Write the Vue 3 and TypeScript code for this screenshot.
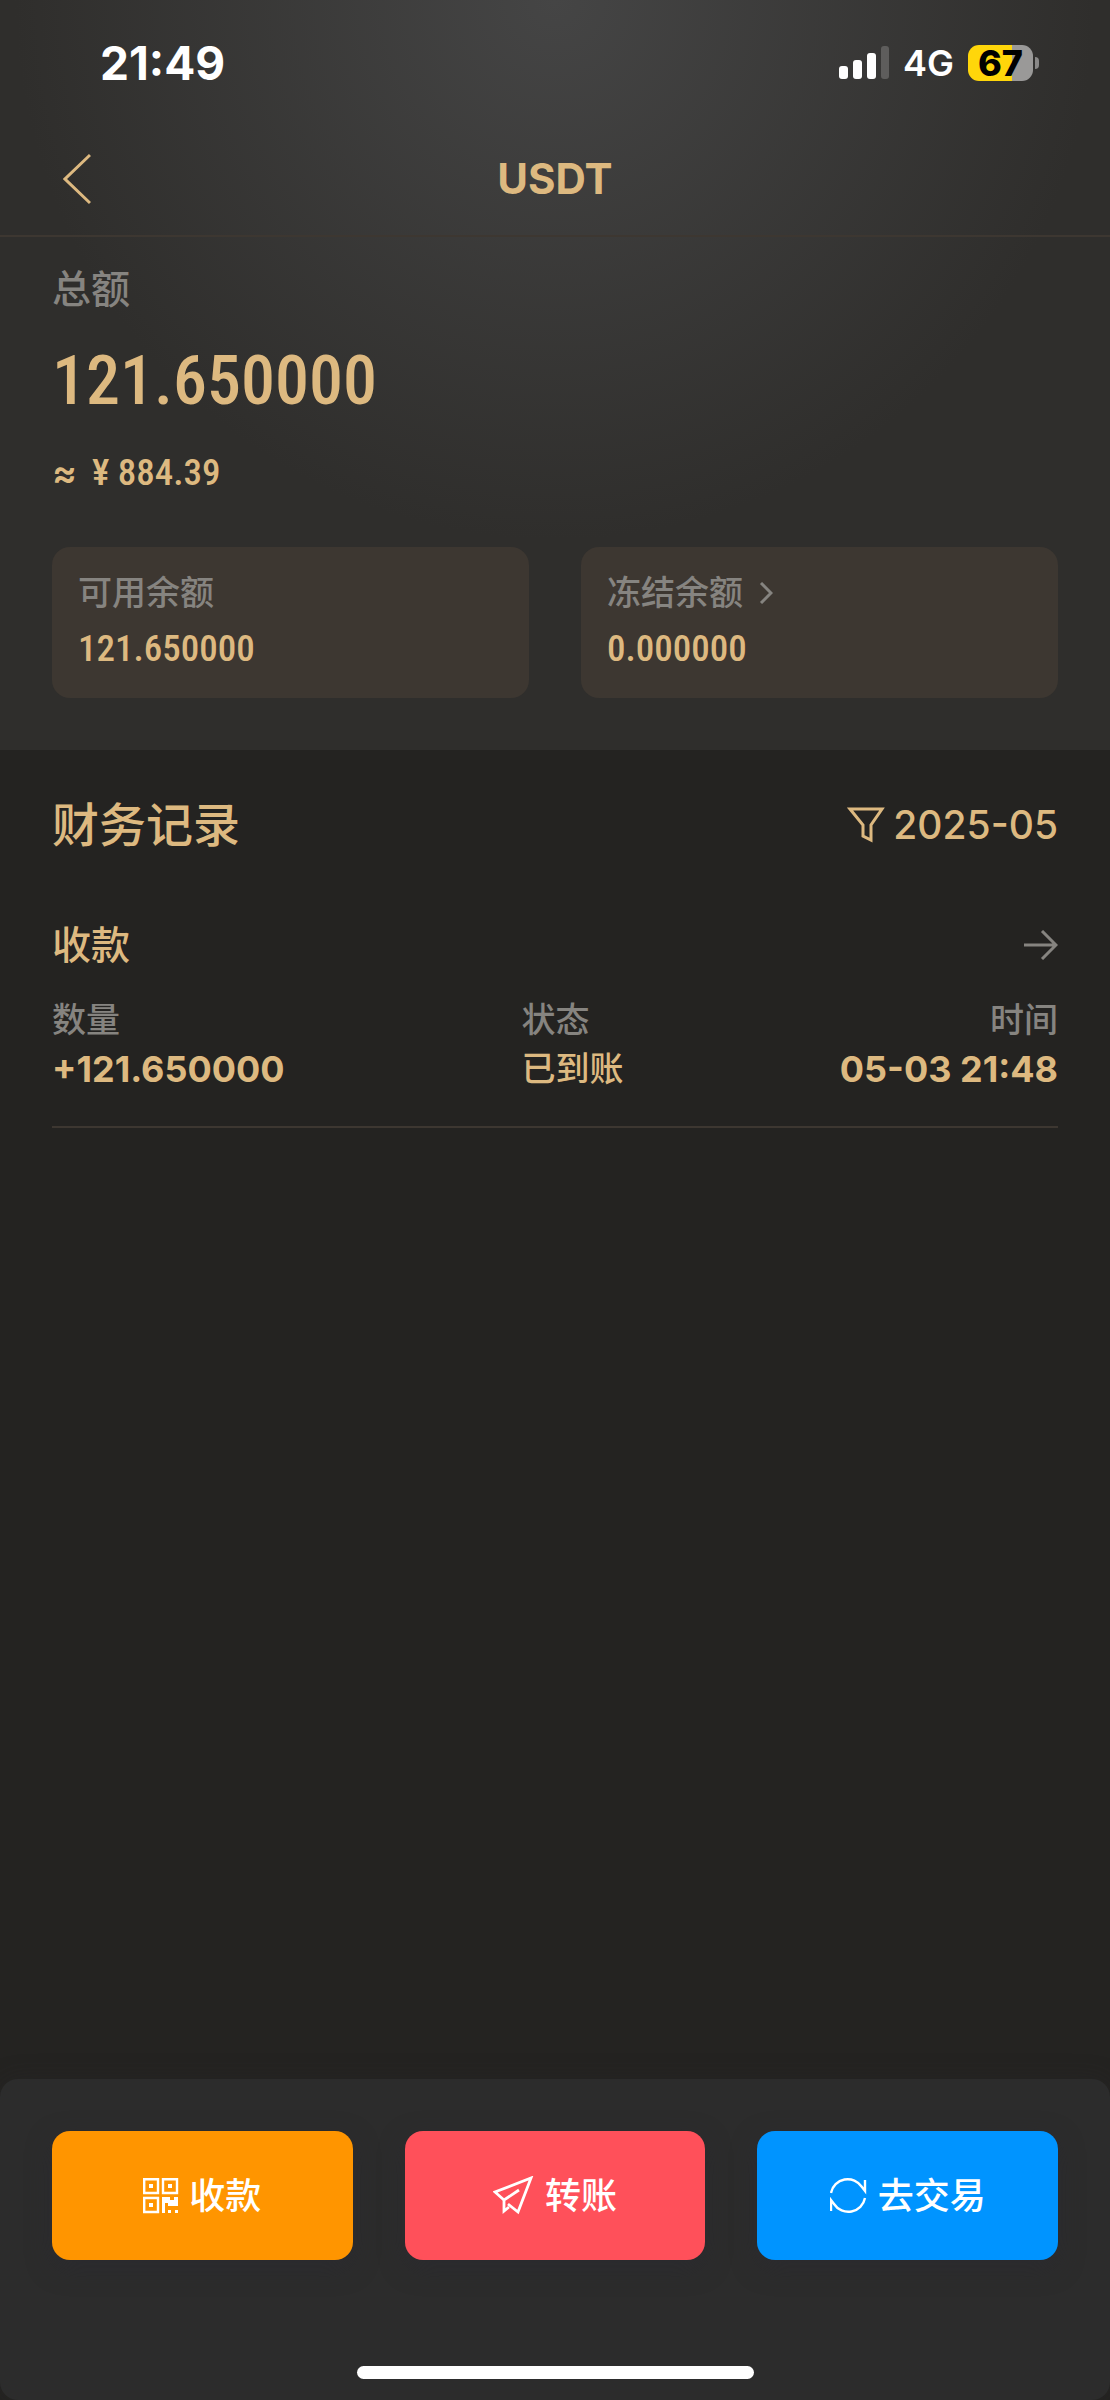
<script setup lang="ts">
interface Balance {
  label: string
  value: string
  link?: string
}

interface Field {
  label: string
  value: string
}

interface RecordItem {
  title: string
  fields: Field[]
}

interface Action {
  id: 'receive' | 'transfer' | 'trade'
  label: string
}

const balances: Balance[] = [
  { label: '可用余额', value: '121.650000' },
  { label: '冻结余额', value: '0.000000', link: '#frozen' },
]

const records: RecordItem[] = [
  {
    title: '收款',
    fields: [
      { label: '数量', value: '+121.650000' },
      { label: '状态', value: '已到账' },
      { label: '时间', value: '05-03 21:48' },
    ],
  },
]

const actions: Action[] = [
  { id: 'receive', label: '收款' },
  { id: 'transfer', label: '转账' },
  { id: 'trade', label: '去交易' },
]
</script>

<template>
  <div class="page">
    <div class="top">
      <div class="status">
        <span class="clock">21:49</span>
        <div class="status-right">
          <svg class="signal" width="50" height="34" viewBox="0 0 50 34" fill="#fff" aria-hidden="true">
            <rect x="0" y="20" width="9" height="13" rx="3" />
            <rect x="14" y="14" width="9" height="19" rx="3" />
            <rect x="28" y="7" width="9" height="26" rx="3" />
            <rect x="42" y="0" width="8" height="33" rx="3" fill="#5e5d5c" />
          </svg>
          <span class="network">4G</span>
          <div class="battery"><span class="level">67</span><i class="nub"></i></div>
        </div>
      </div>

      <header class="nav">
        <button class="back" type="button" aria-label="返回">
          <svg width="28" height="52" viewBox="0 0 28 52" fill="none" stroke="currentColor" stroke-width="3" aria-hidden="true">
            <path d="M27 2 2 26 27 50" />
          </svg>
        </button>
        <h1>USDT</h1>
      </header>

      <section class="summary">
        <p class="total-label">总额</p>
        <p class="total">121.650000</p>
        <p class="fiat"><span class="approx">≈</span><span>¥ 884.39</span></p>
        <div class="cards">
          <component :is="b.link ? 'a' : 'div'" v-for="b in balances" :key="b.label" class="card" :href="b.link">
            <span class="card-label">
              {{ b.label }}
              <svg v-if="b.link" width="14" height="22" viewBox="0 0 14 22" fill="none" stroke="currentColor" stroke-width="3" aria-hidden="true">
                <path d="M2 1 12 11 2 21" />
              </svg>
            </span>
            <span class="card-value">{{ b.value }}</span>
          </component>
        </div>
      </section>
    </div>

    <main class="records">
      <div class="records-head">
        <h2>财务记录</h2>
        <button class="filter" type="button">
          <svg width="38" height="36" viewBox="0 0 38 36" fill="none" stroke="currentColor" stroke-width="3" aria-hidden="true">
            <path d="M3 2H35L24 18V33L16 29V18Z" />
          </svg>
          2025-05
        </button>
      </div>

      <article v-for="r in records" :key="r.title" class="record">
        <a class="record-title" href="#detail">
          {{ r.title }}
          <svg width="34" height="30" viewBox="0 0 34 30" fill="none" stroke="currentColor" stroke-width="3" aria-hidden="true">
            <path d="M0 15H32M18 1 32 15 18 29" />
          </svg>
        </a>
        <dl class="fields">
          <div v-for="f in r.fields" :key="f.label" class="field">
            <dt>{{ f.label }}</dt>
            <dd>{{ f.value }}</dd>
          </div>
        </dl>
      </article>
    </main>

    <footer class="bottom">
      <div class="actions">
        <button v-for="a in actions" :key="a.id" type="button" class="action" :class="a.id">
          <svg v-if="a.id === 'receive'" width="36" height="36" viewBox="0 0 36 36" aria-hidden="true">
            <path fill="none" stroke="#fff" stroke-width="2.4" d="M1.2 1.2H15V15H1.2ZM20 1.2H34V15H20ZM1.2 20H15V34H1.2Z" />
            <path fill="#fff" d="M6 6h4v4H6zM25 6h4v4h-4zM6 25h4v4H6zM19 19h8v3h4v-3h4v9H25v-3h-3v10h-3zM25 32h3v3h-3zM32 32h3v3h-3z" />
          </svg>
          <svg v-else-if="a.id === 'transfer'" width="42" height="40" viewBox="0 0 42 40" fill="none" stroke="#fff" stroke-width="2.8" aria-hidden="true">
            <path d="M11 24 2 16 38 2 25 36 15 28" />
            <path d="M26 14 11 24V35L16 31" />
          </svg>
          <svg v-else width="38" height="38" viewBox="0 0 38 38" fill="none" stroke="#fff" stroke-width="2.4" aria-hidden="true">
            <path d="M1 16A17 17 0 0 1 32 10L35 14V3M35 21A17 17 0 0 1 4 27L1 23V34" />
          </svg>
          <span>{{ a.label }}</span>
        </button>
      </div>
      <div class="home-bar"></div>
    </footer>
  </div>
</template>

<style>
body {
  margin: 0;
  background: #242321;
}
</style>

<style scoped>
.page {
  --gold: #ddb980;
  --muted: #868480;
  --card: #3d3731;
  --din: 'Roboto Condensed', 'Liberation Sans Narrow', 'Roboto', sans-serif;
  display: flex;
  flex-direction: column;
  min-height: 100vh;
  color: var(--gold);
  background: #242321;
  font-family: 'Inter', 'Noto Sans CJK SC', sans-serif;
  font-weight: 500;
}

h1,
h2,
p,
dl,
dd {
  margin: 0;
}

button {
  border: 0;
  padding: 0;
  background: none;
  color: inherit;
  font: inherit;
}

a {
  color: inherit;
  text-decoration: none;
}

svg {
  display: block;
  flex: none;
}

.top {
  background: radial-gradient(circle 540px at 50% 0, #454545, #2f2e2c) #2f2e2c;
}

.status {
  display: flex;
  align-items: center;
  justify-content: space-between;
  height: 126px;
  padding: 0 77px 0 100px;
  color: #fff;
}

.clock {
  font-size: 46px;
  font-weight: 700;
}

.status-right {
  display: flex;
  align-items: center;
}

.network {
  margin: 0 14px;
  font-size: 36px;
  font-weight: 600;
}

.battery {
  position: relative;
  width: 65px;
  height: 36px;
  border-radius: 11px;
  background: linear-gradient(90deg, #ffd60a 67%, #9a9998 67%);
}

.level {
  display: block;
  color: #000;
  font-size: 36px;
  font-weight: 800;
  line-height: 36px;
  text-align: center;
}

.nub {
  position: absolute;
  top: 12px;
  right: -6px;
  width: 4px;
  height: 12px;
  border-radius: 0 4px 4px 0;
  background: #8a8988;
}

.nav {
  display: grid;
  grid-template-columns: 1fr auto 1fr;
  align-items: center;
  height: 106px;
  padding: 0 63px 3px;
  border-bottom: 2px solid var(--card);
}

.back {
  justify-self: start;
}

h1 {
  font-size: 42px;
  font-weight: 700;
  line-height: 56px;
}

.summary {
  padding: 24px 52px 52px;
}

.total-label {
  color: var(--muted);
  font-size: 39px;
  line-height: 56px;
}

.total {
  margin-top: 26px;
  font-family: var(--din);
  font-size: 68px;
  line-height: 76px;
}

.fiat {
  display: flex;
  gap: 15px;
  margin-top: 26px;
  font-family: var(--din);
  font-size: 37px;
  line-height: 56px;
}

.approx {
  font-family: 'Inter', sans-serif;
  font-weight: 600;
}

.cards {
  display: grid;
  grid-template-columns: 1fr 1fr;
  gap: 52px;
  margin-top: 46px;
}

.card {
  display: flex;
  flex-direction: column;
  gap: 8px;
  padding: 22px 26px 25px;
  border-radius: 18px;
  background: var(--card);
}

.card-label {
  display: flex;
  align-items: center;
  gap: 16px;
  color: var(--muted);
  font-size: 34px;
  line-height: 48px;
}

.card-value {
  font-family: var(--din);
  font-size: 37px;
  line-height: 48px;
}

.records {
  flex: 1;
  padding: 47px 52px;
}

.records-head {
  display: flex;
  align-items: center;
  justify-content: space-between;
}

h2 {
  font-size: 47px;
  font-weight: 500;
  line-height: 56px;
}

.filter {
  display: flex;
  align-items: center;
  gap: 8px;
  font-size: 39px;
  line-height: 56px;
}

.record {
  margin-top: 64px;
  padding-bottom: 32px;
  border-bottom: 2px solid var(--card);
}

.record-title {
  display: flex;
  align-items: center;
  justify-content: space-between;
  font-size: 39px;
  line-height: 56px;
}

.record-title svg {
  color: var(--muted);
}

.fields {
  display: grid;
  grid-template-columns: 7fr 4fr 4fr;
  margin-top: 23px;
}

.field:last-child {
  text-align: right;
}

dt {
  color: var(--muted);
  font-size: 34px;
  line-height: 48px;
}

dd {
  font-size: 36px;
  font-weight: 700;
  line-height: 50px;
}

.field:nth-child(2) dd {
  font-size: 34px;
  font-weight: 500;
}

.bottom {
  padding: 52px 52px 21px;
  border-radius: 18px;
  background: #2c2c2c;
  box-shadow: 0 0 24px rgba(40, 40, 44, 0.3);
}

.actions {
  display: grid;
  grid-template-columns: repeat(3, 1fr);
  gap: 52px;
}

.action {
  display: flex;
  align-items: center;
  justify-content: center;
  gap: 10px;
  height: 129px;
  border-radius: 18px;
  color: #fff;
  font-size: 36px;
  line-height: 48px;
  box-shadow: 0 8px 24px rgba(42, 42, 48, 0.6);
}

.receive {
  background: #ff9500;
}

.transfer {
  background: #ff505a;
}

.trade {
  background: #0094ff;
}

.home-bar {
  width: 40%;
  max-width: 397px;
  height: 13px;
  margin: 106px auto 0;
  border-radius: 7px;
  background: #fff;
}
</style>
